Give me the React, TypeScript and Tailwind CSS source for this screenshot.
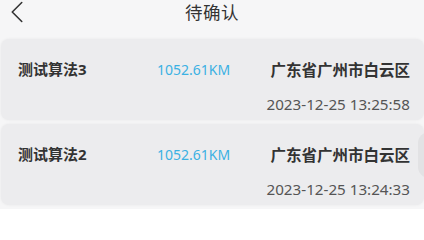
import { ChevronLeft } from 'lucide-react'

type Task = { name: string; distance: string; place: string; time: string }

const TASKS: Task[] = [
  { name: '测试算法3', distance: '1052.61KM', place: '广东省广州市白云区', time: '2023-12-25 13:25:58' },
  { name: '测试算法2', distance: '1052.61KM', place: '广东省广州市白云区', time: '2023-12-25 13:24:33' },
]

const FONT = "font-['Noto_Sans','Noto_Sans_CJK_SC',sans-serif]"

export default function App() {
  return (
    <div className={`w-[424px] h-[209px] overflow-hidden bg-[#f6f6f7] ${FONT} relative`}>
      {/* Header */}
      <div className="h-[39px] relative flex justify-center">
        <ChevronLeft className="absolute left-[-2px] top-[-7px] w-[38px] h-[38px] text-[#333]" strokeWidth={1} />
        <div className="text-[17.5px] leading-[25px] text-[#333] tracking-[0.5px]">待确认</div>
      </div>

      <div className="flex flex-col gap-[4px] pl-[1px]">
        {TASKS.map((t) => (
          <div
            key={t.name}
            className="h-[81px] rounded-[8px] bg-[#ececee] shadow-[0_0_3px_rgba(0,0,0,0.06)] pl-[17px] pr-[14px] pt-[18px]"
          >
            <div className="flex items-center h-[24px]">
              <div className="w-[139px] text-[15px] font-bold text-[#333]">{t.name}</div>
              <div className="text-[14px] text-[#3bb1e3]">{t.distance}</div>
              <div className="ml-auto text-[15.5px] font-bold text-[#333] mt-[4px]">{t.place}</div>
            </div>
            <div className="flex justify-end mt-[12px] text-[15.2px] leading-[22px] text-[#555]">{t.time}</div>
          </div>
        ))}
      </div>

      {/* edge of floating control */}
      <div className="absolute right-[-16px] top-[132px] w-[22px] h-[46px] rounded-full bg-[#e2e2e4]" />
    </div>
  )
}
